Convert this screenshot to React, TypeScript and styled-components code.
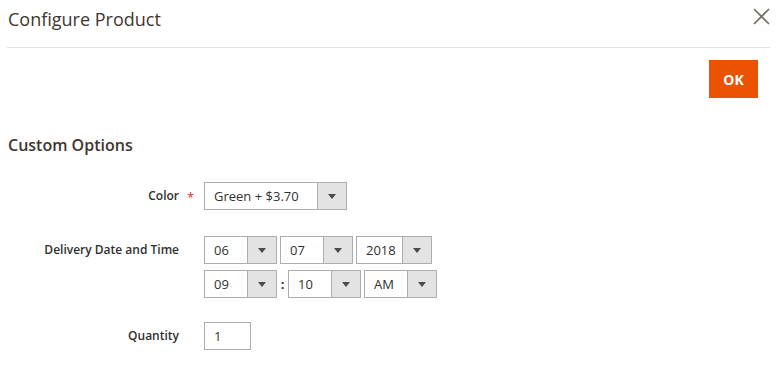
import React from 'react';
import styled, { createGlobalStyle } from 'styled-components';

const GlobalStyle = createGlobalStyle`
  body {
    margin: 0;
    background: #ffffff;
    font-family: 'Open Sans', 'Liberation Sans', sans-serif;
    color: #303030;
  }
`;

const Modal = styled.div`
  width: 777px;
  height: 372px;
  overflow: hidden;
  background: #ffffff;
`;

const Header = styled.header`
  display: flex;
  align-items: center;
  justify-content: space-between;
  height: 47px;
  margin: 0 7px;
  border-bottom: 1px solid #e3e3e3;
`;

const Title = styled.h1`
  margin: -9px 0 0 1px;
  font-size: 18px;
  font-weight: 400;
  color: #41362f;
`;

const CloseButton = styled.button`
  display: flex;
  padding: 0;
  margin: -14px 0 0 0;
  border: none;
  background: none;
  cursor: pointer;
`;

const Actions = styled.div`
  display: flex;
  justify-content: flex-end;
  padding: 12px 19px 0 0;
`;

const PrimaryButton = styled.button`
  width: 49px;
  height: 38px;
  border: none;
  background: #eb5202;
  color: #ffffff;
  font-family: 'Open Sans', 'Liberation Sans', sans-serif;
  font-size: 14px;
  font-weight: 700;
  cursor: pointer;
`;

const Section = styled.section`
  padding: 0 8px;
`;

const SectionTitle = styled.h2`
  margin: 36px 0 26px 0;
  font-size: 16px;
  font-weight: 600;
  color: #41362f;
`;

const Fields = styled.div`
  display: flex;
  flex-direction: column;
  gap: 24px;
`;

const Field = styled.div`
  display: flex;
  align-items: flex-start;
`;

const Label = styled.label`
  width: 171px;
  text-align: right;
  font-size: 12px;
  font-weight: 600;
  line-height: 28px;
  color: #303030;
`;

const Marker = styled.span`
  width: 25px;
  padding-left: 8px;
  box-sizing: border-box;
  line-height: 30px;
  font-size: 13px;
  color: #e22626;
`;

const Controls = styled.div`
  display: flex;
  flex-direction: column;
  gap: 6px;
`;

const ControlRow = styled.div<{ $gap?: number }>`
  display: flex;
  align-items: center;
  gap: ${(p) => p.$gap ?? 3}px;
`;

const SelectBox = styled.div<{ $width: number }>`
  display: flex;
  width: ${(p) => p.$width}px;
  height: 28px;
  box-sizing: border-box;
  border: 1px solid #adadad;
  background: #ffffff;
`;

const SelectValue = styled.span`
  flex: 1;
  padding-left: 9px;
  font-size: 13px;
  line-height: 26px;
  color: #303030;
`;

const SelectArrow = styled.span`
  display: flex;
  align-items: center;
  justify-content: center;
  width: 28px;
  border-left: 1px solid #adadad;
  background: #e3e3e3;
`;

const Colon = styled.span`
  width: 11px;
  text-align: center;
  font-size: 13px;
  font-weight: 700;
  color: #303030;
`;

const Spacer = styled.span`
  width: 3px;
`;

const QtyInput = styled.input`
  width: 47px;
  height: 28px;
  box-sizing: border-box;
  border: 1px solid #adadad;
  padding: 0 9px;
  font-family: 'Open Sans', 'Liberation Sans', sans-serif;
  font-size: 13px;
  color: #303030;
`;

const Select: React.FC<{ value: string; width: number }> = ({ value, width }) => (
  <SelectBox $width={width}>
    <SelectValue>{value}</SelectValue>
    <SelectArrow>
      <svg width="8" height="5" viewBox="0 0 8 5">
        <path d="M0 0 H8 L4 5 Z" fill="#514943" />
      </svg>
    </SelectArrow>
  </SelectBox>
);

const App: React.FC = () => (
  <Modal>
    <GlobalStyle />
    <Header>
      <Title>Configure Product</Title>
      <CloseButton aria-label="Close">
        <svg width="17" height="17" viewBox="0 0 17 17">
          <path d="M1 1 L16 16 M16 1 L1 16" stroke="#736963" strokeWidth="1.6" />
        </svg>
      </CloseButton>
    </Header>
    <Actions>
      <PrimaryButton>OK</PrimaryButton>
    </Actions>
    <Section>
      <SectionTitle>Custom Options</SectionTitle>
      <Fields>
        <Field>
          <Label>Color</Label>
          <Marker>*</Marker>
          <Controls>
            <Select value="Green + $3.70" width={143} />
          </Controls>
        </Field>
        <Field>
          <Label>Delivery Date and Time</Label>
          <Marker />
          <Controls>
            <ControlRow>
              <Select value="06" width={73} />
              <Select value="07" width={73} />
              <Select value="2018" width={76} />
            </ControlRow>
            <ControlRow $gap={0}>
              <Select value="09" width={73} />
              <Colon>:</Colon>
              <Select value="10" width={73} />
              <Spacer />
              <Select value="AM" width={73} />
            </ControlRow>
          </Controls>
        </Field>
        <Field>
          <Label>Quantity</Label>
          <Marker />
          <Controls>
            <QtyInput defaultValue="1" />
          </Controls>
        </Field>
      </Fields>
    </Section>
  </Modal>
);

export default App;
